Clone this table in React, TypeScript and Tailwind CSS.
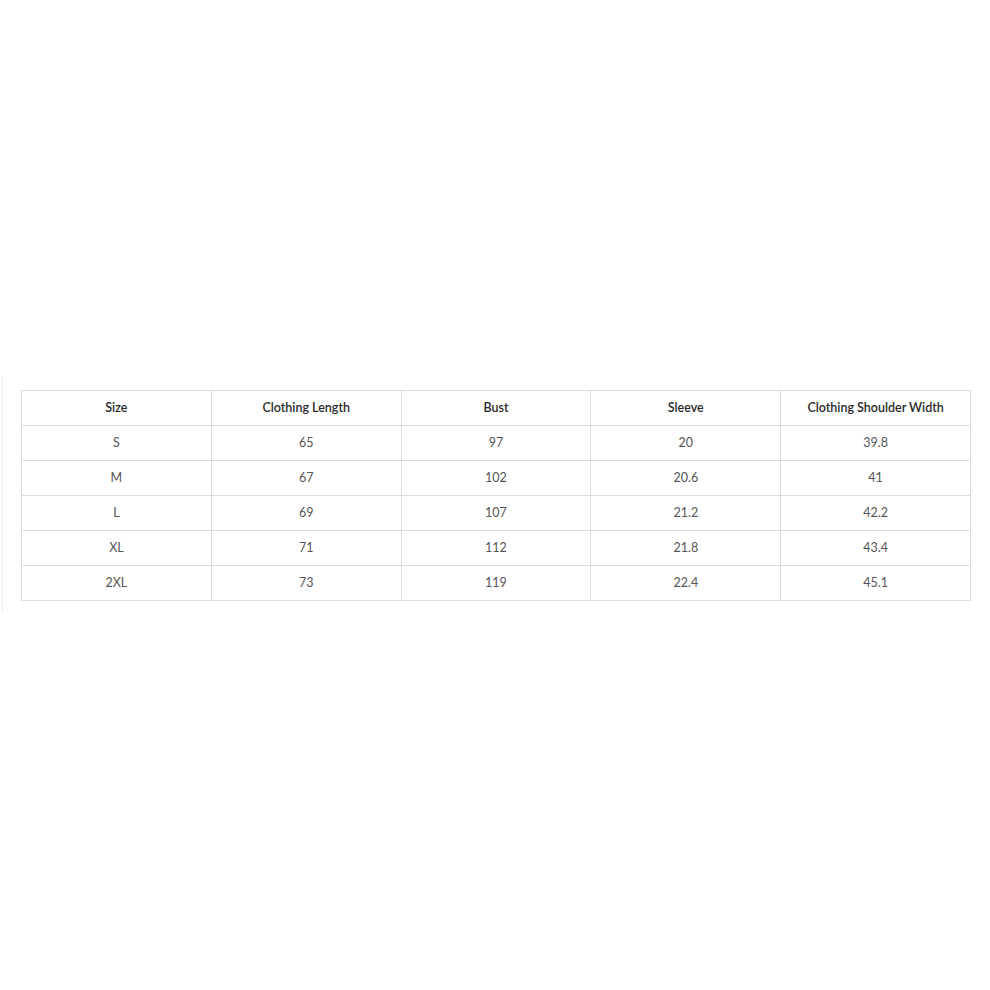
import React from "react";

const headers = ["Size", "Clothing Length", "Bust", "Sleeve", "Clothing Shoulder Width"];
const rows = [
  ["S", "65", "97", "20", "39.8"],
  ["M", "67", "102", "20.6", "41"],
  ["L", "69", "107", "21.2", "42.2"],
  ["XL", "71", "112", "21.8", "43.4"],
  ["2XL", "73", "119", "22.4", "45.1"],
];

export default function App() {
  return (
    <div className="w-[990px] h-[990px] bg-white pt-[376px]" style={{ fontFamily: "Lato, 'Open Sans', sans-serif" }}>
      <div className="flex flex-row items-start">
        <div className="ml-[2px] w-px h-[236px] bg-[#ececec]" />
        <table className="ml-[18px] mt-[14px] w-[950px] table-fixed border-collapse border border-[#dcdcdc]">
          <thead>
            <tr className="h-[35px]">
              {headers.map((h) => (
                <th key={h} className="border border-[#dcdcdc] text-center text-[12.5px] font-semibold text-[#2a2a2a] p-0">
                  {h}
                </th>
              ))}
            </tr>
          </thead>
          <tbody>
            {rows.map((r) => (
              <tr key={r[0]} className="h-[35px]">
                {r.map((c, i) => (
                  <td key={i} className="border border-[#dcdcdc] text-center text-[12.5px] font-normal text-[#555] p-0">
                    {c}
                  </td>
                ))}
              </tr>
            ))}
          </tbody>
        </table>
      </div>
    </div>
  );
}
